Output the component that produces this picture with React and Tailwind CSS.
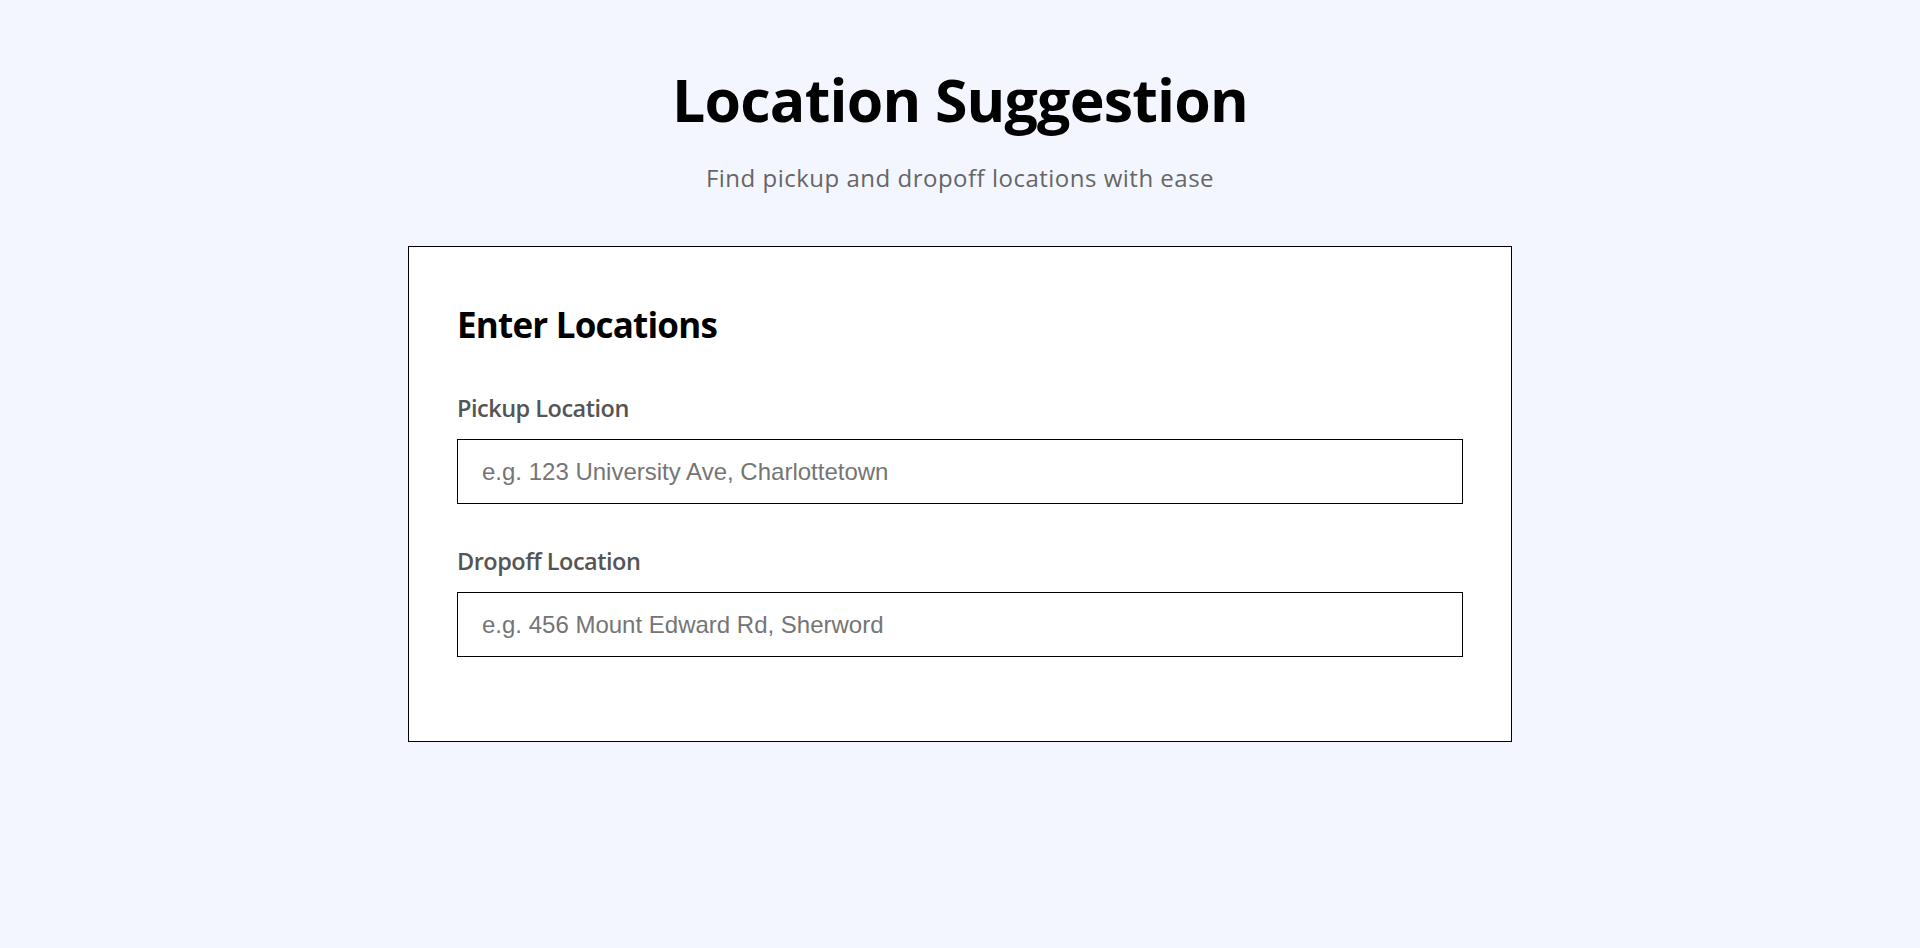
import React, { useState } from 'react';

const App = () => {
  const [pickup, setPickup] = useState('');
  const [dropoff, setDropoff] = useState('');

  return (
    <div className="min-h-screen bg-[#f3f6fe] pt-[63px] font-['Open_Sans',sans-serif]">
      {/* Header */}
      <div className="text-center">
        <h1 className="text-[59px] leading-[72px] font-bold tracking-[-0.8px] text-black">Location Suggestion</h1>
        <p className="mt-[27px] text-[24px] leading-[32px] tracking-[0.5px] text-[#666666]">
          Find pickup and dropoff locations with ease
        </p>
      </div>

      {/* Form card */}
      <div className="mx-auto mt-[52px] w-[1104px] border border-black bg-white px-[48px] pt-[56px] pb-[84px]">
        <h2 className="text-[35px] leading-[44px] font-bold tracking-[-0.8px] text-black">Enter Locations</h2>

        <div className="mt-[45px]">
          <label className="block text-[23.5px] leading-[32px] font-semibold tracking-[-0.5px] text-[#555555]">
            Pickup Location
          </label>
          <input
            type="text"
            value={pickup}
            onChange={(e) => setPickup(e.target.value)}
            placeholder="e.g. 123 University Ave, Charlottetown"
            className="mt-[15px] block h-[65px] w-full border border-black px-[24px] text-[24px] font-['Liberation_Sans',Arial,sans-serif] text-black placeholder:text-[#757575] focus:outline-none"
          />
        </div>

        <div className="mt-[41px]">
          <label className="block text-[23.5px] leading-[32px] font-semibold tracking-[-0.5px] text-[#555555]">
            Dropoff Location
          </label>
          <input
            type="text"
            value={dropoff}
            onChange={(e) => setDropoff(e.target.value)}
            placeholder="e.g. 456 Mount Edward Rd, Sherword"
            className="mt-[15px] block h-[65px] w-full border border-black px-[24px] text-[24px] font-['Liberation_Sans',Arial,sans-serif] text-black placeholder:text-[#757575] focus:outline-none"
          />
        </div>
      </div>
    </div>
  );
};

export default App;
